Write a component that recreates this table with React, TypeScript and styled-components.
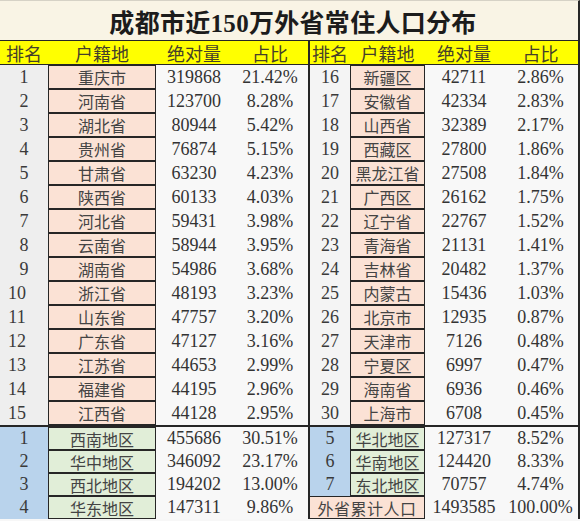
import React from "react";
import styled, { createGlobalStyle, css } from "styled-components";

const GlobalStyle = createGlobalStyle`
  html, body { margin: 0; padding: 0; background: #ffffff; }
  #root { width: 580px; }
`;

const COLS = "48px 108px 76px 76px 42px 75px 78px 75px";
const LINE = "#262626";
const CELL_FONT = `"Liberation Serif", "Noto Sans CJK SC", serif`;

const Sheet = styled.div`
  width: 580px;
  height: 521px;
  overflow: hidden;
  background: #f7f7f7;
  font-family: ${CELL_FONT};
  color: #333;
`;

const Title = styled.h1`
  margin: 0;
  height: 41px;
  display: flex;
  align-items: center;
  justify-content: center;
  padding-left: 8px;
  box-sizing: border-box;
  background: #f9f4e5;
  border-top: 1px solid #d6d2c6;
  border-right: 2px solid ${LINE};
  border-bottom: 1px solid ${LINE};
  font-family: "Liberation Serif", "Noto Sans CJK SC", serif;
  font-weight: 700;
  font-size: 25px;
  color: #1c1c1c;
  letter-spacing: 0.3px;
`;

const Grid = styled.div<{ $topLine?: boolean; $rowHeight?: number }>`
  display: grid;
  grid-template-columns: ${COLS};
  grid-auto-rows: ${(p) => p.$rowHeight ?? 24}px;
  border-right: 2px solid ${LINE};
  ${(p) =>
    p.$topLine &&
    css`
      border-top: 2px solid ${LINE};
    `}
`;

const HeaderRow = styled(Grid)`
  background: #ffff00;
  border-bottom: 1px solid ${LINE};
`;

const HeaderCell = styled.div<{ $divider?: boolean }>`
  display: flex;
  align-items: center;
  justify-content: center;
  font-family: "Noto Sans CJK SC", sans-serif;
  font-size: 18px;
  color: #45402a;
  white-space: nowrap;
  ${(p) =>
    p.$divider &&
    css`
      border-left: 2px solid ${LINE};
    `}
`;

const baseCell = css`
  display: flex;
  align-items: center;
  justify-content: center;
  box-sizing: border-box;
  white-space: nowrap;
`;

const RankCell = styled.div<{ $tone: "gray" | "blue"; $divider?: boolean; $double?: boolean }>`
  ${baseCell}
  font-size: 18px;
  color: #3a3a3a;
  background: ${(p) => (p.$tone === "blue" ? "#b9d3ec" : p.$divider ? "#f4f4f4" : "#eeeeee")};
  ${(p) =>
    p.$double &&
    css`
      padding-right: 14px;
    `}
  ${(p) =>
    p.$divider &&
    css`
      border-left: 2px solid ${LINE};
    `}
`;

const PlaceCell = styled.div<{ $tone: "pink" | "green"; $span?: boolean; $divider?: boolean }>`
  ${baseCell}
  font-family: "Noto Sans CJK SC", sans-serif;
  font-size: 16px;
  color: #444;
  background: ${(p) => (p.$tone === "green" ? "#e1eed8" : "#fbe2d5")};
  border: 1px solid ${LINE};
  ${(p) =>
    p.$span &&
    css`
      grid-column: span 2;
      letter-spacing: 0.5px;
    `}
  ${(p) =>
    p.$divider &&
    css`
      border-left: 2px solid ${LINE};
    `}
`;

const NumCell = styled.div`
  ${baseCell}
  font-size: 18px;
  color: #333;
  background: #f8f8f8;
`;

type Row = [string, string, string, string];

const leftRows: Row[] = [
  ["1", "重庆市", "319868", "21.42%"],
  ["2", "河南省", "123700", "8.28%"],
  ["3", "湖北省", "80944", "5.42%"],
  ["4", "贵州省", "76874", "5.15%"],
  ["5", "甘肃省", "63230", "4.23%"],
  ["6", "陕西省", "60133", "4.03%"],
  ["7", "河北省", "59431", "3.98%"],
  ["8", "云南省", "58944", "3.95%"],
  ["9", "湖南省", "54986", "3.68%"],
  ["10", "浙江省", "48193", "3.23%"],
  ["11", "山东省", "47757", "3.20%"],
  ["12", "广东省", "47127", "3.16%"],
  ["13", "江苏省", "44653", "2.99%"],
  ["14", "福建省", "44195", "2.96%"],
  ["15", "江西省", "44128", "2.95%"],
];

const rightRows: Row[] = [
  ["16", "新疆区", "42711", "2.86%"],
  ["17", "安徽省", "42334", "2.83%"],
  ["18", "山西省", "32389", "2.17%"],
  ["19", "西藏区", "27800", "1.86%"],
  ["20", "黑龙江省", "27508", "1.84%"],
  ["21", "广西区", "26162", "1.75%"],
  ["22", "辽宁省", "22767", "1.52%"],
  ["23", "青海省", "21131", "1.41%"],
  ["24", "吉林省", "20482", "1.37%"],
  ["25", "内蒙古", "15436", "1.03%"],
  ["26", "北京市", "12935", "0.87%"],
  ["27", "天津市", "7126", "0.48%"],
  ["28", "宁夏区", "6997", "0.47%"],
  ["29", "海南省", "6936", "0.46%"],
  ["30", "上海市", "6708", "0.45%"],
];

const regionLeft: Row[] = [
  ["1", "西南地区", "455686", "30.51%"],
  ["2", "华中地区", "346092", "23.17%"],
  ["3", "西北地区", "194202", "13.00%"],
  ["4", "华东地区", "147311", "9.86%"],
];

const regionRight: (Row | null)[] = [
  ["5", "华北地区", "127317", "8.52%"],
  ["6", "华南地区", "124420", "8.33%"],
  ["7", "东北地区", "70757", "4.74%"],
  null,
];

const headers = ["排名", "户籍地", "绝对量", "占比"];

export default function App() {
  return (
    <>
      <GlobalStyle />
      <Sheet>
        <Title>成都市近150万外省常住人口分布</Title>
        <HeaderRow $rowHeight={23}>
          {[...headers, ...headers].map((h, i) => (
            <HeaderCell key={i} $divider={i === 4}>
              {h}
            </HeaderCell>
          ))}
        </HeaderRow>
        <Grid>
          {leftRows.map((l, i) => {
            const r = rightRows[i];
            return (
              <React.Fragment key={i}>
                <RankCell $tone="gray" $double={l[0].length > 1}>{l[0]}</RankCell>
                <PlaceCell $tone="pink">{l[1]}</PlaceCell>
                <NumCell>{l[2]}</NumCell>
                <NumCell>{l[3]}</NumCell>
                <RankCell $tone="gray" $divider>{r[0]}</RankCell>
                <PlaceCell $tone="pink">{r[1]}</PlaceCell>
                <NumCell>{r[2]}</NumCell>
                <NumCell>{r[3]}</NumCell>
              </React.Fragment>
            );
          })}
        </Grid>
        <Grid $topLine $rowHeight={23}>
          {regionLeft.map((l, i) => {
            const r = regionRight[i];
            return (
              <React.Fragment key={i}>
                <RankCell $tone="blue">{l[0]}</RankCell>
                <PlaceCell $tone="green">{l[1]}</PlaceCell>
                <NumCell>{l[2]}</NumCell>
                <NumCell>{l[3]}</NumCell>
                {r ? (
                  <>
                    <RankCell $tone="blue" $divider>{r[0]}</RankCell>
                    <PlaceCell $tone="green">{r[1]}</PlaceCell>
                    <NumCell>{r[2]}</NumCell>
                    <NumCell>{r[3]}</NumCell>
                  </>
                ) : (
                  <>
                    <PlaceCell $tone="pink" $span $divider>外省累计人口</PlaceCell>
                    <NumCell>1493585</NumCell>
                    <NumCell>100.00%</NumCell>
                  </>
                )}
              </React.Fragment>
            );
          })}
        </Grid>
      </Sheet>
    </>
  );
}
